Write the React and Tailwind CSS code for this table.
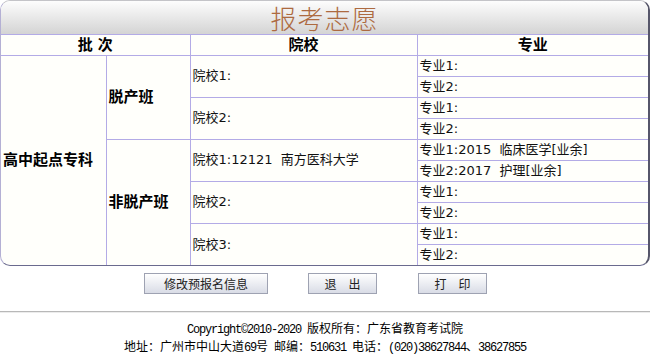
import React from "react";

const cell = "border border-[#b3abe6] p-0";
const sch = "pl-[2px] text-[13px] text-[#111] align-middle";
const maj = "pl-[2px] text-[13px] text-[#111] align-middle h-[21px] leading-[20px]";
const lbl = "pl-[2px] text-[15px] font-bold text-black align-middle";

function M({ children }) {
  return (
    <span className="font-['Liberation_Mono',monospace] text-[12px] tracking-[-1.2px]">
      {children}
    </span>
  );
}

export default function App() {
  return (
    <div
      className="w-[654px] h-[356px] bg-white"
      style={{ fontFamily: '"DejaVu Sans", "Noto Sans CJK SC", sans-serif' }}
    >
      <div className="w-[650px]">
        <div className="h-[266px] rounded-[10px] border border-t-[#c4c4c8] border-l-[#b4b0d4] border-r-2 border-r-[#56566a] border-b-[#6a6a8e] overflow-hidden bg-[#fffffb]">
          <div className="h-[34px] border-b border-[#b3abe6] bg-gradient-to-b from-[#fdfdfd] to-[#d4d4d4] flex items-center justify-center">
            <span className="text-[26px] leading-none text-[#ad6a40] font-['Noto_Sans_CJK_SC',sans-serif] font-light tracking-[1px]">
              报考志愿
            </span>
          </div>
          <table className="w-full border-collapse border-hidden table-fixed">
            <colgroup>
              <col className="w-[105px]" />
              <col className="w-[84px]" />
              <col className="w-[227px]" />
              <col />
            </colgroup>
            <tbody>
              <tr className="h-[20px]">
                <td colSpan={2} className={`${cell} text-center text-[15px] font-bold leading-[18px]`}>
                  批&nbsp;次
                </td>
                <td className={`${cell} text-center text-[15px] font-bold leading-[18px]`}>院校</td>
                <td className={`${cell} text-center text-[15px] font-bold leading-[18px]`}>专业</td>
              </tr>
              <tr className="h-[21px]">
                <td rowSpan={10} className={`${cell} ${lbl}`}>高中起点专科</td>
                <td rowSpan={4} className={`${cell} ${lbl}`}>脱产班</td>
                <td rowSpan={2} className={`${cell} ${sch}`}>院校1:</td>
                <td className={`${cell} ${maj}`}>专业1:</td>
              </tr>
              <tr className="h-[21px]">
                <td className={`${cell} ${maj}`}>专业2:</td>
              </tr>
              <tr className="h-[21px]">
                <td rowSpan={2} className={`${cell} ${sch}`}>院校2:</td>
                <td className={`${cell} ${maj}`}>专业1:</td>
              </tr>
              <tr className="h-[21px]">
                <td className={`${cell} ${maj}`}>专业2:</td>
              </tr>
              <tr className="h-[21px]">
                <td rowSpan={6} className={`${cell} ${lbl}`}>非脱产班</td>
                <td rowSpan={2} className={`${cell} ${sch} whitespace-pre`}>院校1:12121  南方医科大学</td>
                <td className={`${cell} ${maj} whitespace-pre`}>专业1:2015  临床医学[业余]</td>
              </tr>
              <tr className="h-[21px]">
                <td className={`${cell} ${maj} whitespace-pre`}>专业2:2017  护理[业余]</td>
              </tr>
              <tr className="h-[21px]">
                <td rowSpan={2} className={`${cell} ${sch}`}>院校2:</td>
                <td className={`${cell} ${maj}`}>专业1:</td>
              </tr>
              <tr className="h-[21px]">
                <td className={`${cell} ${maj}`}>专业2:</td>
              </tr>
              <tr className="h-[21px]">
                <td rowSpan={2} className={`${cell} ${sch}`}>院校3:</td>
                <td className={`${cell} ${maj}`}>专业1:</td>
              </tr>
              <tr className="h-[21px]">
                <td className={`${cell} ${maj}`}>专业2:</td>
              </tr>
            </tbody>
          </table>
        </div>

        <div className="flex pl-[144px] mt-[7px] font-['Noto_Sans_CJK_SC',sans-serif] text-[12px] text-[#222]">
          <button className="w-[124px] h-[21px] border border-[#9ea2b2] bg-gradient-to-b from-[#ffffff] to-[#d9dce6] leading-[19px]">
            修改预报名信息
          </button>
          <button className="ml-[40px] w-[69px] h-[21px] border border-[#9ea2b2] bg-gradient-to-b from-[#ffffff] to-[#d9dce6] leading-[19px]">
            退　出
          </button>
          <button className="ml-[41px] w-[69px] h-[21px] border border-[#9ea2b2] bg-gradient-to-b from-[#ffffff] to-[#d9dce6] leading-[19px]">
            打　印
          </button>
        </div>

        <div className="mt-[17px] h-[2px] border-t border-[#b8b8b8] border-b border-b-[#ececec]"></div>

        <div className="mt-[7px] flex flex-col items-center text-[12px] leading-[15px] text-black font-['Noto_Sans_CJK_SC',sans-serif]">
          <div className="whitespace-pre">
            <M>Copyright©2010-2020 </M>版权所有：广东省教育考试院
          </div>
          <div className="whitespace-pre">
            地址：广州市中山大道<M>69</M>号<M> </M>邮编：<M>510631 </M>电话：<M>(020)38627844</M>、<M>38627855</M>
          </div>
        </div>
      </div>
    </div>
  );
}
